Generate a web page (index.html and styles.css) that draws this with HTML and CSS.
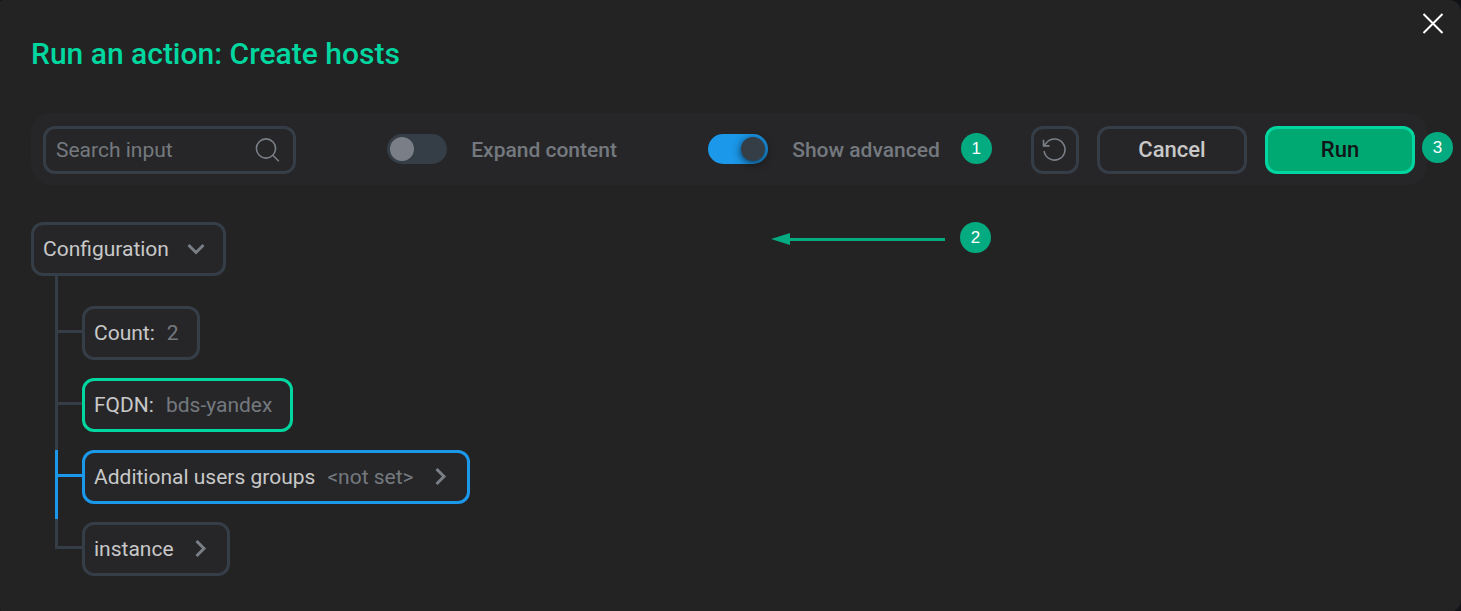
FILE: index.html
```html
<!DOCTYPE html>
<html lang="en">
<head>
    <meta charset="UTF-8">
    <meta name="viewport" content="width=device-width, initial-scale=1.0">
    <title>Run an action: Create hosts</title>
    <link rel="stylesheet" href="styles.css">
</head>
<body>
    <div class="dialog">
        <button type="button" class="close-btn" aria-label="Close">
            <svg width="22" height="22" viewBox="0 0 22 22"><path d="M1.5 2l19 19M20.5 2l-19 19"/></svg>
        </button>
        <h1 class="dialog-title">Run an action: Create hosts</h1>

        <div class="toolbar">
            <div class="search">
                <input type="text" class="search-input" placeholder="Search input" aria-label="Search input">
                <svg class="search-icon" width="26" height="26" viewBox="0 0 26 26"><circle cx="11" cy="11.5" r="9.6"/><path d="M17.8 18.3l6 6"/></svg>
            </div>

            <label class="switch" for="expandContent">
                <input type="checkbox" id="expandContent" class="switch-input">
                <span class="switch-label">Expand content</span>
            </label>

            <label class="switch" for="showAdvanced">
                <input type="checkbox" id="showAdvanced" class="switch-input" checked>
                <span class="switch-label">Show advanced</span>
                <span class="badge badge-switch">1</span>
            </label>

            <div class="actions">
                <button type="button" class="btn btn-icon" aria-label="Reset">
                    <svg width="26" height="26" viewBox="0 0 26 26"><path d="M2.1 14A10.5 10.5 0 1 0 4.3 6L1.8 8.6M1.5 2.8v6.1h6"/></svg>
                </button>
                <button type="button" class="btn">Cancel</button>
                <button type="button" class="btn btn-run">Run</button>
            </div>
            <span class="badge badge-run">3</span>
        </div>

        <div class="tree">
            <button type="button" class="node">
                <span>Configuration</span>
                <svg class="chevron" width="24" height="24" viewBox="0 0 24 24"><path d="M4.5 8l7.5 7.5L19.5 8"/></svg>
            </button>
            <ul class="tree-list">
                <li class="tree-item">
                    <button type="button" class="node"><span>Count:</span><span class="node-value">2</span></button>
                </li>
                <li class="tree-item">
                    <button type="button" class="node node-changed"><span>FQDN:</span><span class="node-value">bds-yandex</span></button>
                </li>
                <li class="tree-item tree-item-advanced">
                    <button type="button" class="node node-advanced">
                        <span>Additional users groups</span><span class="node-value">&lt;not set&gt;</span>
                        <svg class="chevron" width="23" height="24" viewBox="0 0 23 24"><path d="M7.5 4l7.5 7.5L7.5 19"/></svg>
                    </button>
                </li>
                <li class="tree-item">
                    <button type="button" class="node">
                        <span>instance</span>
                        <svg class="chevron" width="23" height="24" viewBox="0 0 23 24"><path d="M7.5 4l7.5 7.5L7.5 19"/></svg>
                    </button>
                </li>
            </ul>
            <div class="callout">
                <svg width="174" height="14" viewBox="0 0 174 14"><path d="M0 8L19 2v12z"/><path d="M18 7h156v3H18z"/></svg>
                <span class="badge">2</span>
            </div>
        </div>
    </div>
</body>
</html>
```
FILE: styles.css
```css
* {
    box-sizing: border-box;
}

body {
    margin: 0;
    background-color: #101215;
    font-family: Roboto, sans-serif;
    font-size: 21px;
    line-height: 24px;
    color: #c8c8c8;
}

button,
input {
    margin: 0;
    font: inherit;
    color: inherit;
}

button {
    cursor: pointer;
}

svg {
    display: block;
    flex: none;
    fill: none;
    stroke: #7a7f87;
}

.dialog {
    position: relative;
    min-height: 100vh;
    padding: 36px 34px 36px 31px;
    background-color: #232323;
    border-radius: 3px 12px 12px 3px;
}

.dialog-title {
    margin: 0 0 41px;
    font-size: 30px;
    line-height: 36px;
    font-weight: 500;
    color: #00d7a0;
}

.close-btn {
    position: absolute;
    top: 12px;
    right: 17px;
    padding: 0;
    border: none;
    background: none;
}

.close-btn svg {
    stroke: #fff;
    stroke-width: 2;
}

/* Toolbar */
.toolbar {
    position: relative;
    display: flex;
    justify-content: space-between;
    align-items: center;
    padding: 13px 12px 11px;
    background-color: #262628;
    border-radius: 20px;
}

.search {
    display: flex;
    align-items: center;
    width: 253px;
    height: 48px;
    padding: 0 12px 0 10px;
    border: 3px solid #353d47;
    border-radius: 12px;
}

.search-input {
    flex: 1;
    min-width: 0;
    padding: 0;
    border: none;
    outline: none;
    background: none;
}

.search-input::placeholder {
    color: #74797f;
    opacity: 1;
}

.search-icon {
    stroke-width: 1.6;
}

/* Switches */
.switch {
    position: relative;
    display: flex;
    align-items: center;
    gap: 24px;
    font-weight: 500;
    color: #74797f;
    cursor: pointer;
}

.switch-input {
    appearance: none;
    display: flex;
    align-items: center;
    width: 60px;
    height: 30px;
    margin-bottom: 2px;
    padding: 0 3px;
    border-radius: 15px;
    background-color: #353d47;
    cursor: pointer;
}

.switch-input::before {
    content: '';
    width: 24px;
    height: 24px;
    border-radius: 50%;
    background-color: #7a7f87;
}

.switch-input:checked {
    justify-content: flex-end;
    background-color: #1b98ea;
}

.switch-input:checked::before {
    background-color: #353d47;
    box-shadow: 0 2px 8px rgba(0, 0, 0, 0.7);
}

/* Buttons */
.actions {
    display: flex;
    gap: 18px;
}

.btn {
    display: flex;
    align-items: center;
    justify-content: center;
    width: 150px;
    height: 48px;
    padding: 0;
    border: 3px solid #353d47;
    border-radius: 12px;
    background: none;
    font-size: 22px;
    font-weight: 500;
}

.btn-icon {
    width: 48px;
}

.btn-icon svg {
    stroke-width: 1.6;
}

.btn-run {
    border-color: #00d7a0;
    background-color: #00a972;
    color: #121517;
}

/* Numbered badges */
.badge {
    display: flex;
    align-items: center;
    justify-content: center;
    width: 31px;
    height: 31px;
    border-radius: 50%;
    background-color: #05ab80;
    font-family: "Liberation Sans", Arial, sans-serif;
    font-size: 17px;
    font-weight: 400;
    color: #fff;
}

.badge-switch {
    position: absolute;
    top: -1px;
    left: calc(100% + 21px);
}

.badge-run {
    position: absolute;
    top: 19px;
    right: -26px;
}

/* Configuration tree */
.tree {
    position: relative;
    margin-top: 37px;
}

.node {
    display: flex;
    align-items: center;
    height: 54px;
    padding: 0 15px 0 9px;
    border: 3px solid #353d47;
    border-radius: 12px;
    background-color: #262628;
    white-space: nowrap;
}

.node-changed {
    border-color: #00d7a0;
}

.node-advanced {
    border-color: #1b98ea;
}

.node-value {
    margin: 0 3px 0 12px;
    color: #74797f;
}

.chevron {
    margin-left: 15px;
    stroke-width: 3;
}

.node-value + .chevron {
    margin-left: 12px;
}

.tree-list {
    margin: 0;
    padding: 30px 0 0 51px;
    list-style: none;
}

.tree-item {
    position: relative;
    padding-bottom: 18px;
}

.tree-item:last-child {
    padding-bottom: 0;
}

/* Connecting lines */
.tree-item::before,
.tree-item::after {
    content: '';
    position: absolute;
    left: -27px;
    background-color: #353d47;
}

.tree-item::before {
    top: 0;
    bottom: 0;
    width: 3px;
}

.tree-item::after {
    top: 24px;
    width: 27px;
    height: 3px;
}

.tree-item:first-child::before {
    top: -30px;
}

.tree-item:last-child::before {
    top: -3px;
    bottom: auto;
    height: 30px;
}

.tree-item-advanced::before,
.tree-item-advanced::after {
    background-color: #1b98ea;
}

.callout {
    position: absolute;
    top: 0;
    left: 53%;
    display: flex;
    align-items: center;
    gap: 15px;
}

.callout svg {
    fill: #05ab80;
    stroke: none;
}
```
